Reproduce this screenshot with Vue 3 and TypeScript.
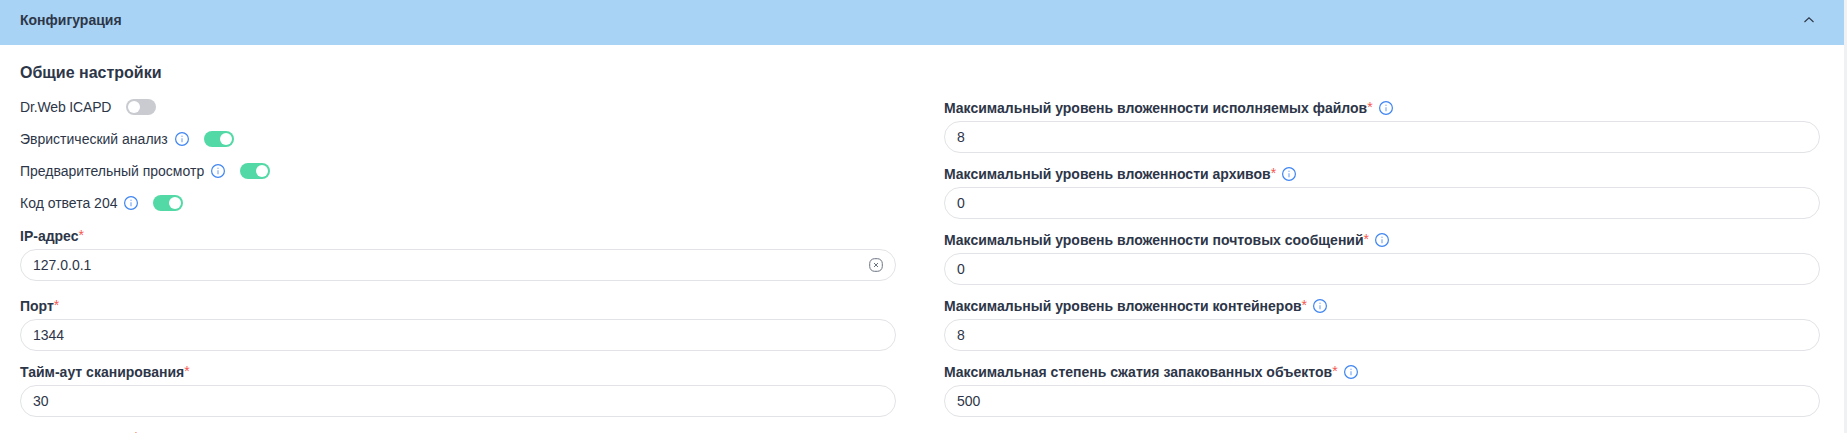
<script setup lang="ts">
interface Toggle { label: string; info: boolean; on: boolean; latin?: boolean }
interface Field { label: string; value: string; info?: boolean; clear?: boolean; extra?: boolean }

const toggles: Toggle[] = [
  { label: 'Dr.Web ICAPD', info: false, on: false, latin: true },
  { label: 'Эвристический анализ', info: true, on: true },
  { label: 'Предварительный просмотр', info: true, on: true },
  { label: 'Код ответа 204', info: true, on: true },
]
const leftFields: Field[] = [
  { label: 'IP-адрес', value: '127.0.0.1', clear: true, extra: true },
  { label: 'Порт', value: '1344' },
  { label: 'Тайм-аут сканирования', value: '30' },
]
const rightFields: Field[] = [
  { label: 'Максимальный уровень вложенности исполняемых файлов', value: '8', info: true },
  { label: 'Максимальный уровень вложенности архивов', value: '0', info: true },
  { label: 'Максимальный уровень вложенности почтовых сообщений', value: '0', info: true },
  { label: 'Максимальный уровень вложенности контейнеров', value: '8', info: true },
  { label: 'Максимальная степень сжатия запакованных объектов', value: '500', info: true },
]
</script>

<template>
  <div class="page">
    <div class="card">
      <header class="head">
        <span class="head-title">Конфигурация</span>
        <svg class="chevron" width="12" height="12" viewBox="0 0 12 12" fill="none">
          <path d="M1.5 8 L6 3.8 L10.5 8" stroke="#2b3445" stroke-width="1.1" />
        </svg>
      </header>
      <div class="body">
        <h3 class="section">Общие настройки</h3>
        <div class="cols">
          <div class="col">
            <div v-for="t in toggles" :key="t.label" class="toggle-row">
              <span class="toggle-label" :class="{ latin: t.latin }">{{ t.label }}</span>
              <svg v-if="t.info" class="info" width="14" height="14" viewBox="0 0 14 14" fill="none">
                <circle cx="7" cy="7" r="6.4" stroke="#3f85f2" stroke-width="1.2" />
                <circle cx="7" cy="4.2" r="0.8" fill="#8fb8f5" />
                <path d="M7 6.2 V10.2" stroke="#8fb8f5" stroke-width="1.4" />
              </svg>
              <span class="switch" :class="{ on: t.on }"><span class="knob"></span></span>
            </div>
            <div v-for="f in leftFields" :key="f.label" class="field" :class="{ extra: f.extra }">
              <div class="label">{{ f.label }}<span class="req">*</span></div>
              <div class="input">
                <span class="value">{{ f.value }}</span>
                <svg v-if="f.clear" class="clear" width="14" height="14" viewBox="0 0 14 14" fill="none">
                  <rect x="0.7" y="0.7" width="12.6" height="12.6" rx="4.8" stroke="#6b7280" stroke-width="1" />
                  <path d="M5 5 L9 9 M9 5 L5 9" stroke="#6b7280" stroke-width="1" />
                </svg>
              </div>
            </div>
            <div class="field">
              <div class="label">Размер журнала<span class="req">*</span></div>
            </div>
          </div>
          <div class="col right">
            <div v-for="f in rightFields" :key="f.label" class="field">
              <div class="label">
                {{ f.label }}<span class="req">*</span>
                <svg class="info label-info" width="14" height="14" viewBox="0 0 14 14" fill="none">
                  <circle cx="7" cy="7" r="6.4" stroke="#3f85f2" stroke-width="1.2" />
                  <circle cx="7" cy="4.2" r="0.8" fill="#8fb8f5" />
                  <path d="M7 6.2 V10.2" stroke="#8fb8f5" stroke-width="1.4" />
                </svg>
              </div>
              <div class="input"><span class="value">{{ f.value }}</span></div>
            </div>
          </div>
        </div>
      </div>
    </div>
  </div>
</template>

<style>
html, body { margin: 0; height: 433px; overflow: hidden; background: #f0f1f3; }
</style>

<style scoped>
.page {
  height: 433px;
  overflow: hidden;
  padding-right: 3px;
  font-family: "Liberation Sans", Arial, sans-serif;
  font-size: 14px;
  color: #2d3648;
}
.card { background: #fff; height: 433px; overflow: hidden; }
.head {
  height: 45px;
  box-sizing: border-box;
  background: #a8d3f4;
  display: flex;
  align-items: center;
  justify-content: space-between;
  padding: 0 29px 5px 20px;
}
.head-title { font-weight: 700; font-size: 14px; }
.chevron { display: block; }
.body { padding: 0 24px 0 20px; }
.section {
  margin: 0;
  height: 46px;
  padding-top: 18px;
  box-sizing: border-box;
  font-size: 16px;
  line-height: 20px;
  font-weight: 700;
}
.cols {
  display: grid;
  grid-template-columns: 1fr 1fr;
  column-gap: 48px;
}
.col { min-width: 0; }
.right { padding-top: 6px; }
.toggle-row {
  height: 32px;
  display: flex;
  align-items: center;
}
.toggle-label { line-height: 20px; }
.toggle-label.latin { letter-spacing: -0.15px; }
.info { display: inline-block; flex: none; margin-left: 7px; }
.label-info { vertical-align: -2px; margin-left: 6px; }
.switch {
  margin-left: 15px;
  width: 30px;
  height: 16px;
  border-radius: 8px;
  background: #c9cbd0;
  position: relative;
  flex: none;
}
.switch.on { background: #52d9a6; }
.knob {
  position: absolute;
  top: 2px;
  left: 2px;
  width: 12px;
  height: 12px;
  border-radius: 50%;
  background: #fff;
}
.switch.on .knob { left: 16px; }
.field { padding-bottom: 10px; }
.field.extra { padding-top: 6px; padding-bottom: 14px; }
.label {
  height: 24px;
  padding: 1px 0 3px;
  box-sizing: border-box;
  line-height: 20px;
  font-weight: 700;
  white-space: nowrap;
}
.req { color: #f5574f; font-weight: 400; line-height: 14px; vertical-align: 1px; }
.input {
  height: 32px;
  box-sizing: border-box;
  border: 1px solid #e2e3e6;
  border-radius: 16px;
  padding: 0 12px 0 12px;
  display: flex;
  align-items: center;
  justify-content: space-between;
}
.value { line-height: 20px; }
.clear { display: block; }
</style>
